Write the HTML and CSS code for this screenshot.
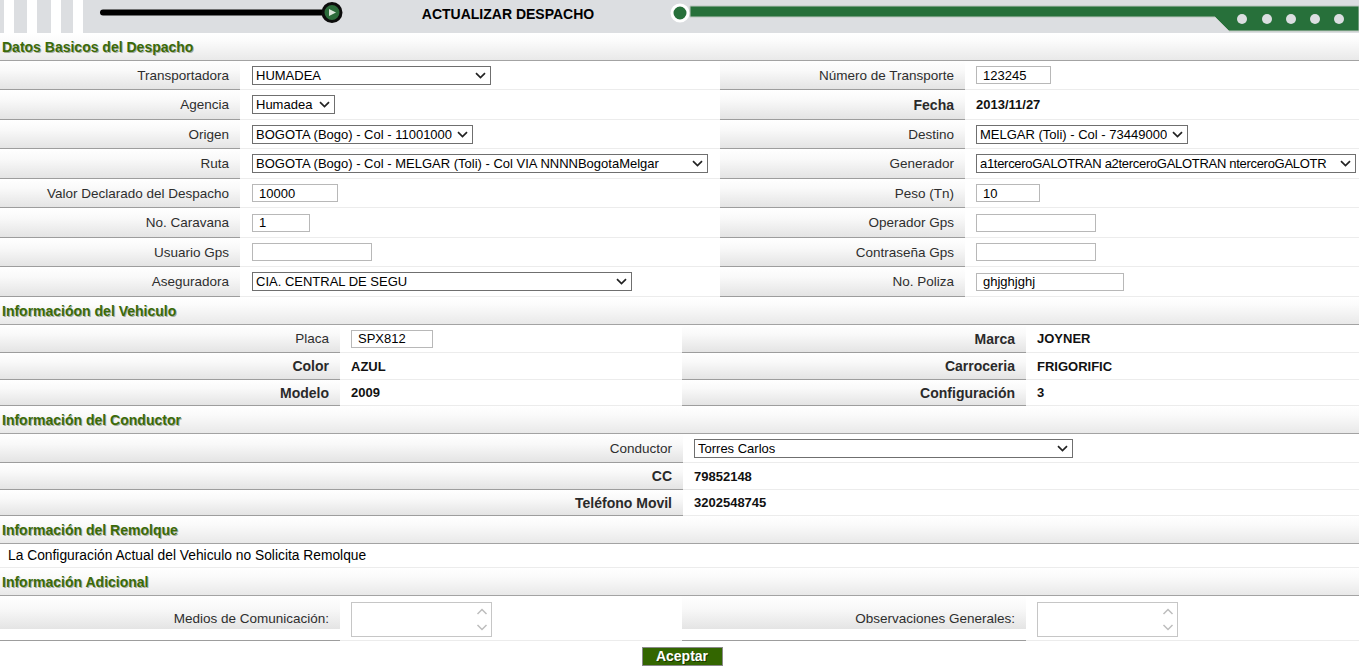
FILE: index.html
```html
<!DOCTYPE html>
<html lang="es">
<head>
<meta charset="utf-8">
<title>Actualizar Despacho</title>
<link rel="stylesheet" href="styles.css">
</head>
<body>
<header class="topbar">
  <svg class="tb-left" width="350" height="33" viewBox="0 0 350 33">
    <rect x="4" y="0" width="10" height="33" fill="#fff"/>
    <rect x="27" y="0" width="10" height="33" fill="#fff"/>
    <rect x="51" y="0" width="10" height="33" fill="#fff"/>
    <rect x="73" y="0" width="10" height="33" fill="#fff"/>
    <path d="M103 12.5H324" stroke="#000" stroke-width="6" stroke-linecap="round"/>
    <circle cx="332" cy="12.5" r="9" fill="#2b6b3a" stroke="#0c0c0c" stroke-width="3"/>
    <polygon points="329,9 329,16 336,12.5" fill="#dce8dc"/>
  </svg>
  <div class="tb-title">ACTUALIZAR DESPACHO</div>
  <svg class="tb-right" width="693" height="33" viewBox="0 0 693 33">
    <polygon points="24,6 693,6 693,31 563,31 549,17 24,17" fill="#27703a" stroke="#bcc6be" stroke-width="1"/>
    <circle cx="14" cy="13" r="8" fill="#27703a" stroke="#fff" stroke-width="3"/>
    <circle cx="576" cy="19" r="5" fill="#dcdee1"/>
    <circle cx="601" cy="19" r="5" fill="#dcdee1"/>
    <circle cx="625" cy="19" r="5" fill="#dcdee1"/>
    <circle cx="649" cy="19" r="5" fill="#dcdee1"/>
    <circle cx="673" cy="19" r="5" fill="#dcdee1"/>
  </svg>
</header>

<main class="form">
  <section class="sec">
    <h2 class="sec-title">Datos Basicos del Despacho</h2>
    <div class="grid g-basic">
      <div class="lbl">Transportadora</div>
      <div class="val"><select class="sel" style="width:239px"><option>HUMADEA</option></select></div>
      <div class="lbl">Número de Transporte</div>
      <div class="val"><input class="inp" style="width:75px" value="123245"></div>

      <div class="lbl">Agencia</div>
      <div class="val"><select class="sel" style="width:83px"><option>Humadea</option></select></div>
      <div class="lbl b">Fecha</div>
      <div class="val txt">2013/11/27</div>

      <div class="lbl">Origen</div>
      <div class="val"><select class="sel" style="width:221px"><option>BOGOTA (Bogo) - Col - 11001000</option></select></div>
      <div class="lbl">Destino</div>
      <div class="val"><select class="sel" style="width:212px"><option>MELGAR (Toli) - Col - 73449000</option></select></div>

      <div class="lbl">Ruta</div>
      <div class="val"><select class="sel" style="width:456px"><option>BOGOTA (Bogo) - Col - MELGAR (Toli) - Col VIA NNNNBogotaMelgar</option></select></div>
      <div class="lbl">Generador</div>
      <div class="val"><select class="sel tight" style="width:380px"><option>a1terceroGALOTRAN a2terceroGALOTRAN nterceroGALOTR</option></select></div>

      <div class="lbl">Valor Declarado del Despacho</div>
      <div class="val"><input class="inp" style="width:86px" value="10000"></div>
      <div class="lbl">Peso (Tn)</div>
      <div class="val"><input class="inp" style="width:64px" value="10"></div>

      <div class="lbl">No. Caravana</div>
      <div class="val"><input class="inp" style="width:58px" value="1"></div>
      <div class="lbl">Operador Gps</div>
      <div class="val"><input class="inp" style="width:120px" value=""></div>

      <div class="lbl">Usuario Gps</div>
      <div class="val"><input class="inp" style="width:120px" value=""></div>
      <div class="lbl">Contraseña Gps</div>
      <div class="val"><input class="inp" style="width:120px" value=""></div>

      <div class="lbl">Aseguradora</div>
      <div class="val"><select class="sel" style="width:380px"><option>CIA. CENTRAL DE SEGU</option></select></div>
      <div class="lbl">No. Poliza</div>
      <div class="val"><input class="inp" style="width:148px" value="ghjghjghj"></div>
    </div>
  </section>

  <section class="sec">
    <h2 class="sec-title">Informacióon del Vehiculo</h2>
    <div class="grid g-veh">
      <div class="lbl">Placa</div>
      <div class="val"><input class="inp" style="width:82px" value="SPX812"></div>
      <div class="lbl b">Marca</div>
      <div class="val txt">JOYNER</div>

      <div class="lbl b">Color</div>
      <div class="val txt">AZUL</div>
      <div class="lbl b">Carroceria</div>
      <div class="val txt">FRIGORIFIC</div>

      <div class="lbl b">Modelo</div>
      <div class="val txt">2009</div>
      <div class="lbl b">Configuración</div>
      <div class="val txt">3</div>
    </div>
  </section>

  <section class="sec">
    <h2 class="sec-title">Información del Conductor</h2>
    <div class="grid g-cond">
      <div class="lbl">Conductor</div>
      <div class="val"><select class="sel" style="width:379px"><option>Torres Carlos</option></select></div>
      <div class="lbl b">CC</div>
      <div class="val txt">79852148</div>
      <div class="lbl b">Teléfono Movil</div>
      <div class="val txt">3202548745</div>
    </div>
  </section>

  <section class="sec">
    <h2 class="sec-title">Información del Remolque</h2>
    <p class="note">La Configuración Actual del Vehiculo no Solicita Remolque</p>
  </section>

  <section class="sec">
    <h2 class="sec-title">Información Adicional</h2>
    <div class="grid g-add">
      <div class="lbl">Medios de Comunicación:</div>
      <div class="val"><textarea class="ta"></textarea></div>
      <div class="lbl">Observaciones Generales:</div>
      <div class="val"><textarea class="ta"></textarea></div>
    </div>
  </section>

  <div class="actions"><button class="btn" type="button">Aceptar</button></div>
</main>
</body>
</html>
```

FILE: styles.css
```css
* { box-sizing: border-box; }
html, body { margin: 0; padding: 0; background: #fff; }
body {
  font-family: "Liberation Sans", Arial, sans-serif;
  font-size: 13px;
  color: #111;
  width: 1359px;
  overflow: hidden;
}

/* top bar */
.topbar {
  display: flex;
  align-items: stretch;
  height: 33px;
  background: #dcdee1;
}
.tb-left, .tb-right { display: block; flex: none; }
.tb-title {
  width: 316px;
  flex: none;
  text-align: center;
  font-weight: bold;
  font-size: 14px;
  line-height: 28px;
  color: #000;
}

/* sections */
.sec-title {
  margin: 0;
  height: 28px;
  padding: 0 0 0 2px;
  font-size: 14px;
  font-weight: bold;
  line-height: 28px;
  color: #3a6a08;
  text-shadow: 1px 1px 0 rgba(20, 40, 0, 0.35);
  background: linear-gradient(#ffffff 0%, #fbfbfb 30%, #e9e9e9 100%);
  border-bottom: 1px solid #a3a3a3;
}

.grid { display: grid; }
.g-basic {
  grid-template-columns: 240px 480px 245px 1fr;
  grid-template-rows: repeat(4, 29px 30px);
}
.g-veh {
  grid-template-columns: 340px 342px 344px 1fr;
  grid-template-rows: 28px 27px 26px;
}
.g-cond {
  grid-template-columns: 683px 1fr;
  grid-template-rows: 29px 27px 26px;
}
.g-add {
  grid-template-columns: 340px 342px 344px 1fr;
  grid-template-rows: 45px;
}

.lbl {
  display: flex;
  align-items: center;
  justify-content: flex-end;
  padding-right: 11px;
  font-size: 13.5px;
  color: #2e2e2e;
  background: linear-gradient(#ffffff 0%, #f9f9f9 35%, #e4e4e4 100%);
  border-bottom: 1px solid #9d9d9d;
  white-space: nowrap;
}
.lbl.b { font-weight: bold; font-size: 14px; color: #2a2a2a; }
.g-add .lbl {
  align-items: flex-start;
  padding-top: 15px;
  background: linear-gradient(#ffffff 0%, #f8f8f8 40%, #e4e4e4 100%) no-repeat;
  background-size: 100% 33px;
}

.val {
  display: flex;
  align-items: center;
  padding-left: 12px;
  background: #fff;
  border-bottom: 1px solid #ececec;
  white-space: nowrap;
}
.g-basic .val:nth-child(4n) { padding-left: 11px; }
.g-veh .val, .g-add .val { padding-left: 11px; }
.g-cond .val { padding-left: 11px; }
.g-add .val { align-items: flex-start; padding-top: 6px; }
.val.txt { font-weight: bold; color: #111; font-size: 13px; }

.sel {
  -webkit-appearance: none;
  appearance: none;
  height: 19px;
  margin: 0;
  padding: 0 20px 0 3px;
  border: 1px solid #6f6f6f;
  border-radius: 0;
  font-family: "Liberation Sans", Arial, sans-serif;
  font-size: 13px;
  line-height: 17px;
  color: #000;
  background: #fff url("data:image/svg+xml,%3Csvg xmlns='http://www.w3.org/2000/svg' width='11' height='7'%3E%3Cpath d='M1 1.2l4.5 4.3 4.5-4.3' fill='none' stroke='%23222' stroke-width='1.7'/%3E%3C/svg%3E") no-repeat right 4px center;
}
.sel.tight { letter-spacing: -0.3px; padding-right: 16px; }

.inp {
  height: 18px;
  margin: 0;
  padding: 0 6px;
  border: 1px solid #b8b8b8;
  border-radius: 0;
  font-family: "Liberation Sans", Arial, sans-serif;
  font-size: 13px;
  color: #000;
  background: #fff;
  outline: none;
}

.ta {
  display: block;
  width: 141px;
  height: 35px;
  margin: 0;
  padding: 2px;
  border: 1px solid #c6c6c6;
  border-radius: 0;
  resize: none;
  overflow: hidden;
  font-family: "Liberation Sans", Arial, sans-serif;
  font-size: 13px;
  background: #fff url("data:image/svg+xml,%3Csvg xmlns='http://www.w3.org/2000/svg' width='14' height='33'%3E%3Cpath d='M2.5 11l4.5-4.5 4.5 4.5' fill='none' stroke='%23bdbdbd' stroke-width='1.5'/%3E%3Cpath d='M2.5 22l4.5 4.5 4.5-4.5' fill='none' stroke='%23bdbdbd' stroke-width='1.5'/%3E%3C/svg%3E") no-repeat right 2px top 0;
}

.note {
  margin: 0;
  height: 24px;
  padding-left: 8px;
  display: flex;
  align-items: center;
  font-size: 13.8px;
  font-weight: normal;
  color: #000;
  border-bottom: 1px solid #ececec;
}

.actions {
  display: flex;
  justify-content: center;
  padding-top: 6px;
  padding-left: 5px;
}
.btn {
  width: 81px;
  height: 19px;
  margin: 0;
  padding: 0;
  border: 1px solid #8a8a8a;
  border-radius: 0;
  background: #336600;
  color: #fff;
  font-family: "Liberation Sans", Arial, sans-serif;
  font-size: 14px;
  font-weight: bold;
  line-height: 17px;
  text-shadow: 1px 1px 0 rgba(0, 0, 0, 0.5);
}
```
